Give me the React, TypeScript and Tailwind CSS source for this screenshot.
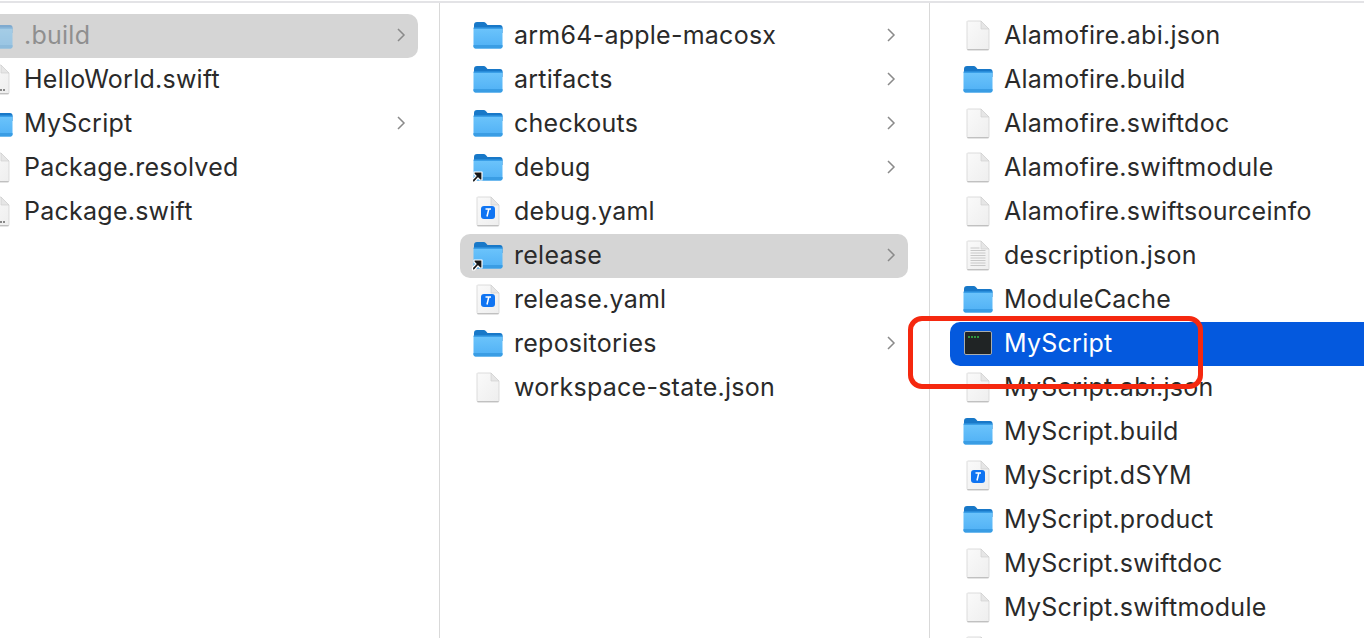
import React from "react";

type Kind = "folder" | "alias" | "doc" | "swift" | "xcode" | "text" | "exec";
type Row = { name: string; kind: Kind; chevron?: boolean; sel?: "gray" | "blue"; dim?: boolean };

function Folder({ dim }: { dim?: boolean }) {
  return (
    <svg width="32" height="30" viewBox="0 0 32 30" opacity={dim ? 0.45 : 1}>
      <defs>
        <linearGradient id="fb" x1="0" y1="0" x2="0" y2="1">
          <stop offset="0" stopColor="#6cc4fb" />
          <stop offset="1" stopColor="#4fb0f5" />
        </linearGradient>
      </defs>
      <path d="M2 5 Q2 2 5 2 H11.5 Q13 2 14 3.2 L15.5 5 H28 Q30.5 5 30.5 7.5 V13 H2 Z" fill="#1878c8" />
      <path d="M1.5 9.5 Q1.5 8 3 8 H29 Q30.5 8 30.5 9.5 V26.5 Q30.5 28.5 28.5 28.5 H3.5 Q1.5 28.5 1.5 26.5 Z" fill="url(#fb)" />
      <rect x="1.5" y="7.5" width="29" height="1.5" fill="#3a9fe8" />
      <path d="M1.5 25 H30.5 V26.5 Q30.5 28.5 28.5 28.5 H3.5 Q1.5 28.5 1.5 26.5 Z" fill="#3a9de4" />
    </svg>
  );
}

function Alias() {
  return (
    <svg className="absolute left-[-1px] bottom-[-1px]" width="13" height="13" viewBox="0 0 13 13">
      <path
        d="M1.5 12 L1.5 9.5 L5 6 L3 4 V2 H11 V10 H9 L7 8 L3.5 12 Z"
        fill="#161616"
        stroke="#fff"
        strokeWidth="1.2"
        strokeLinejoin="round"
      />
    </svg>
  );
}

function Page({ children }: { children?: React.ReactNode }) {
  return (
    <svg width="26" height="31" viewBox="0 0 26 31">
      <defs>
        <linearGradient id="pg" x1="0" y1="0" x2="1" y2="1">
          <stop offset="0" stopColor="#fafafa" />
          <stop offset="1" stopColor="#eeeeee" />
        </linearGradient>
      </defs>
      <path d="M2.5 1 H16 L24 9 V28.5 Q24 30 22.5 30 H3.5 Q2 30 2 28.5 V1.5 Z" fill="url(#pg)" stroke="#d4d4d4" strokeWidth="0.8" />
      <path d="M16 1 V9 H24 Z" fill="#e6e6e6" stroke="#cfcfcf" strokeWidth="0.6" />
      <path d="M2.4 29.7 H23.6" stroke="#b8b8b8" strokeWidth="1" />
      {children}
    </svg>
  );
}

function Icon({ kind, dim }: { kind: Kind; dim?: boolean }) {
  if (kind === "folder") return <Folder dim={dim} />;
  if (kind === "alias")
    return (
      <div className="relative">
        <Folder />
        <Alias />
      </div>
    );
  if (kind === "doc") return <Page />;
  if (kind === "swift")
    return (
      <Page>
        <path d="M6 26 h2 m1 0 h2 m1 0 h2 m1 0 h2 m1 0 h2" stroke="#666" strokeWidth="1.4" />
      </Page>
    );
  if (kind === "text")
    return (
      <Page>
        <path
          d="M5.5 8h9 M5.5 10.5h15 M5.5 13h15 M5.5 15.5h15 M5.5 18h15 M5.5 20.5h15 M5.5 23h15 M5.5 25.5h15"
          stroke="#c8c8c8"
          strokeWidth="1"
        />
      </Page>
    );
  if (kind === "xcode")
    return (
      <Page>
        <rect x="6" y="10" width="14" height="13" rx="3" fill="#0f74f2" />
        <path d="M10.5 13 H16 M13.8 13 L12 20.5" stroke="#fff" strokeWidth="1.5" fill="none" />
      </Page>
    );
  return (
    <svg width="28" height="24" viewBox="0 0 28 24">
      <rect x="0.5" y="0.5" width="27" height="23" rx="1.5" fill="#1f2223" stroke="#a9adad" />
      <rect x="1.5" y="1.5" width="25" height="21" fill="#202425" />
      <path d="M4 6 h2 m1 0 h2 m1 0 h2 m1 0 h2" stroke="#35b84a" strokeWidth="1.6" />
    </svg>
  );
}

function Chevron() {
  return (
    <svg width="10" height="16" viewBox="0 0 10 16" className="shrink-0">
      <path d="M2 2 L8 8 L2 14" fill="none" stroke="#8a8a8a" strokeWidth="1.5" />
    </svg>
  );
}

function FileRow({ row, end }: { row: Row; end?: boolean }) {
  const bg =
    row.sel === "gray" ? "bg-[#d5d5d5] rounded-[10px]" : row.sel === "blue" ? "bg-[#0459de] rounded-l-[10px]" : "";
  const color = row.sel === "blue" ? "text-white" : row.dim ? "text-[#8f8f8f]" : "text-[#2a2a2a]";
  return (
    <div className={`h-11 shrink-0 flex items-center pb-[2px] ${end ? "ml-5" : "ml-5 mr-[21px]"} pl-[12px] pr-[12px] ${bg}`}>
      <div className="w-[32px] h-8 flex items-center justify-center shrink-0">
        <Icon kind={row.kind} dim={row.dim} />
      </div>
      <span className={`ml-[10px] flex-1 text-[25px] leading-none tracking-[0.01em] whitespace-nowrap ${color}`}>
        {row.name}
      </span>
      {row.chevron && <Chevron />}
    </div>
  );
}

const c1: Row[] = [
  { name: ".build", kind: "folder", chevron: true, sel: "gray", dim: true },
  { name: "HelloWorld.swift", kind: "swift" },
  { name: "MyScript", kind: "folder", chevron: true },
  { name: "Package.resolved", kind: "doc" },
  { name: "Package.swift", kind: "swift" },
];
const c2: Row[] = [
  { name: "arm64-apple-macosx", kind: "folder", chevron: true },
  { name: "artifacts", kind: "folder", chevron: true },
  { name: "checkouts", kind: "folder", chevron: true },
  { name: "debug", kind: "alias", chevron: true },
  { name: "debug.yaml", kind: "xcode" },
  { name: "release", kind: "alias", chevron: true, sel: "gray" },
  { name: "release.yaml", kind: "xcode" },
  { name: "repositories", kind: "folder", chevron: true },
  { name: "workspace-state.json", kind: "doc" },
];
const c3: Row[] = [
  { name: "Alamofire.abi.json", kind: "doc" },
  { name: "Alamofire.build", kind: "folder" },
  { name: "Alamofire.swiftdoc", kind: "doc" },
  { name: "Alamofire.swiftmodule", kind: "doc" },
  { name: "Alamofire.swiftsourceinfo", kind: "doc" },
  { name: "description.json", kind: "text" },
  { name: "ModuleCache", kind: "folder" },
  { name: "MyScript", kind: "exec", sel: "blue" },
  { name: "MyScript.abi.json", kind: "doc" },
  { name: "MyScript.build", kind: "folder" },
  { name: "MyScript.dSYM", kind: "xcode" },
  { name: "MyScript.product", kind: "folder" },
  { name: "MyScript.swiftdoc", kind: "doc" },
  { name: "MyScript.swiftmodule", kind: "doc" },
  { name: "", kind: "doc" },
];

export default function App() {
  return (
    <div className="relative w-[1364px] h-[638px] overflow-hidden bg-white font-['Inter','Liberation_Sans',sans-serif]">
      <div className="h-[3px] bg-white border-b-2 border-[#e3e3e6]" />
      <div className="flex h-[635px]">
        <div className="w-[440px] shrink-0 border-r border-[#d9d9d9] overflow-hidden pt-[11px]">
          <div className="ml-[-50px] flex flex-col">
            {c1.map((r) => (
              <FileRow key={r.name} row={r} />
            ))}
          </div>
        </div>
        <div className="w-[490px] shrink-0 border-r border-[#d9d9d9] overflow-hidden pt-[11px] flex flex-col">
          {c2.map((r) => (
            <FileRow key={r.name} row={r} />
          ))}
        </div>
        <div className="flex-1 overflow-hidden pt-[11px] flex flex-col">
          {c3.map((r, i) => (
            <FileRow key={i} row={r} end />
          ))}
        </div>
      </div>
      <div className="absolute left-[908px] top-[316px] w-[295px] h-[73px] border-[5px] border-[#f5280f] rounded-[14px]" />
    </div>
  );
}
